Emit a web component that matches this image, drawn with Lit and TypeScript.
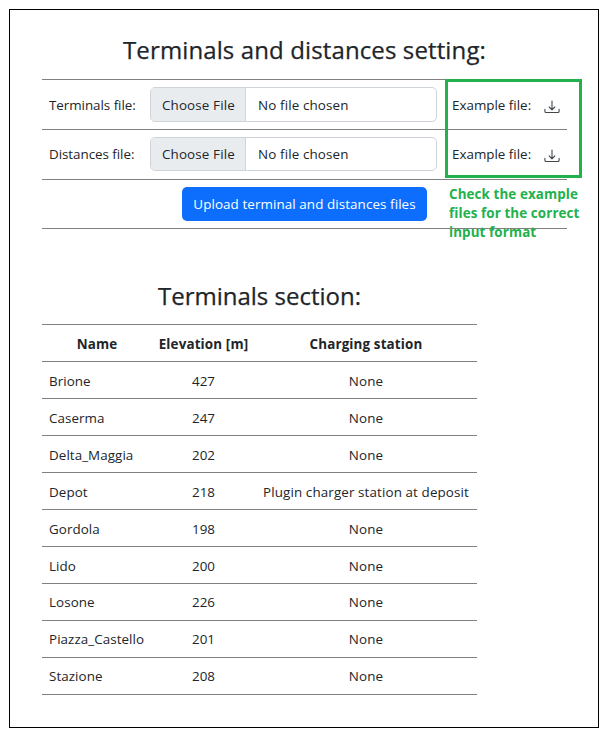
import { LitElement, html, css } from "lit";
import { customElement, property } from "lit/decorators.js";
import { classMap } from "lit/directives/class-map.js";

@customElement("download-icon")
class DownloadIcon extends LitElement {
  static styles = css`
    :host { display: block; width: 16px; height: 16px; }
    svg { display: block; }
  `;
  render() {
    return html`<svg width="16" height="16" viewBox="0 0 16 16" fill="none" stroke="#42474c" stroke-width="1.1" stroke-linecap="round" stroke-linejoin="round">
      <path d="M0.9 10.4v1.8a1.3 1.3 0 0 0 1.3 1.3h11.6a1.3 1.3 0 0 0 1.3-1.3v-1.8" />
      <path d="M8 2v8.6M5.2 8L8 10.8 10.8 8" />
    </svg>`;
  }
}

@customElement("file-row")
class FileRow extends LitElement {
  @property() label = "";
  static styles = css`
    :host {
      display: grid;
      grid-template-columns: 108px 287px 1fr;
      align-items: center;
      box-sizing: border-box;
      border-bottom: 1px solid #808080;
      padding: 7px 0;
    }
    .label { padding-left: 7px; letter-spacing: -0.04px; }
    .input {
      display: flex;
      height: 100%;
      box-sizing: border-box;
      border: 1px solid #ced4da;
      border-radius: 5px;
      overflow: hidden;
    }
    .choose, .status { display: flex; align-items: center; }
    .choose {
      width: 95px;
      padding-left: 11px;
      box-sizing: border-box;
      background: #e9ecef;
      border-right: 1px solid #ced4da;
      flex: none;
      letter-spacing: 0.14px;
    }
    .status { padding-left: 12px; letter-spacing: 0.13px; }
    .example { display: flex; align-items: center; justify-content: space-between; padding: 0 7px 0 15px; }
    download-icon { margin-top: 4px; }
  `;
  render() {
    return html`
      <span class="label">${this.label}</span>
      <div class="input">
        <span class="choose">Choose File</span>
        <span class="status">No file chosen</span>
      </div>
      <div class="example"><span>Example file:</span><download-icon></download-icon></div>
    `;
  }
}

const terminals: [string, number, string][] = [
  ["Brione", 427, "None"],
  ["Caserma", 247, "None"],
  ["Delta_Maggia", 202, "None"],
  ["Depot", 218, "Plugin charger station at deposit"],
  ["Gordola", 198, "None"],
  ["Lido", 200, "None"],
  ["Losone", 226, "None"],
  ["Piazza_Castello", 201, "None"],
  ["Stazione", 208, "None"],
];

@customElement("app-root")
class AppRoot extends LitElement {
  static styles = css`
    :host {
      display: block;
      height: 736px;
      box-sizing: border-box;
      padding: 9px 6px 8px 9px;
      background: #fff;
      color: #212529;
      font: 13.4px/20px "Open Sans", "Noto Sans", sans-serif;
    }
    .frame {
      height: 719px;
      box-sizing: border-box;
      border: 1px solid #000;
      padding: 24px 31px 0 32px;
    }
    h2 {
      margin: 0;
      height: 32px;
      font-size: 24px;
      line-height: 32px;
      font-weight: 500;
      text-align: center;
      white-space: nowrap;
      -webkit-text-stroke: 0.25px #212529;
    }
    .settings h2 { letter-spacing: 0.12px; }
    .settings { position: relative; width: 525px; }
    .rows { margin-top: 13px; border-top: 1px solid #808080; }
    .first { height: 50px; }
    .second { height: 50px; padding-bottom: 8px; }
    .action {
      display: flex;
      height: 49px;
      box-sizing: border-box;
      border-bottom: 1px solid #808080;
      padding: 7px 0 7px 140px;
    }
    button {
      width: 245px;
      height: 34px;
      padding: 0;
      border: 0;
      border-radius: 5px;
      background: #0d6efd;
      color: #fff;
      font: inherit;
      letter-spacing: 0.09px;
      white-space: nowrap;
    }
    .highlight {
      position: absolute;
      left: 403px;
      top: 45px;
      width: 137px;
      height: 99px;
      box-sizing: border-box;
      border: 3px solid #22b14c;
    }
    .note {
      position: absolute;
      left: 407px;
      top: 151px;
      color: #22b14c;
      font-size: 13.4px;
      line-height: 19px;
      font-weight: 700;
      letter-spacing: 0.1px;
      white-space: nowrap;
    }
    .terminals { width: 435px; margin-top: 51px; }
    .table { margin-top: 12px; border-top: 1px solid #808080; }
    .tr {
      display: grid;
      grid-template-columns: 110px 103px 222px;
      align-items: center;
      height: 37px;
      box-sizing: border-box;
      border-bottom: 1px solid #808080;
      text-align: center;
      padding-top: 2px;
    }
    .tr.raised { padding-top: 0; }
    .name { text-align: left; padding-left: 7px; letter-spacing: 0.07px; }
    .station { letter-spacing: 0.12px; }
    .th { font-weight: 700; letter-spacing: 0.14px; }
  `;
  render() {
    return html`
      <div class="frame">
        <section class="settings">
          <h2>Terminals and distances setting:</h2>
          <div class="rows">
            <file-row class="first" label="Terminals file:"></file-row>
            <file-row class="second" label="Distances file:"></file-row>
            <div class="action"><button>Upload terminal and distances files</button></div>
          </div>
          <div class="highlight"></div>
          <div class="note">
            <div>Check the example</div>
            <div>files for the correct</div>
            <div>input format</div>
          </div>
        </section>
        <section class="terminals">
          <h2>Terminals section:</h2>
          <div class="table">
            <div class="tr th"><span>Name</span><span>Elevation [m]</span><span>Charging station</span></div>
            ${terminals.map(
              ([name, elevation, station], i) => html`<div class=${classMap({ tr: true, raised: i > 5 })}>
                <span class="name">${name}</span><span>${elevation}</span><span class="station">${station}</span>
              </div>`
            )}
          </div>
        </section>
      </div>
    `;
  }
}
